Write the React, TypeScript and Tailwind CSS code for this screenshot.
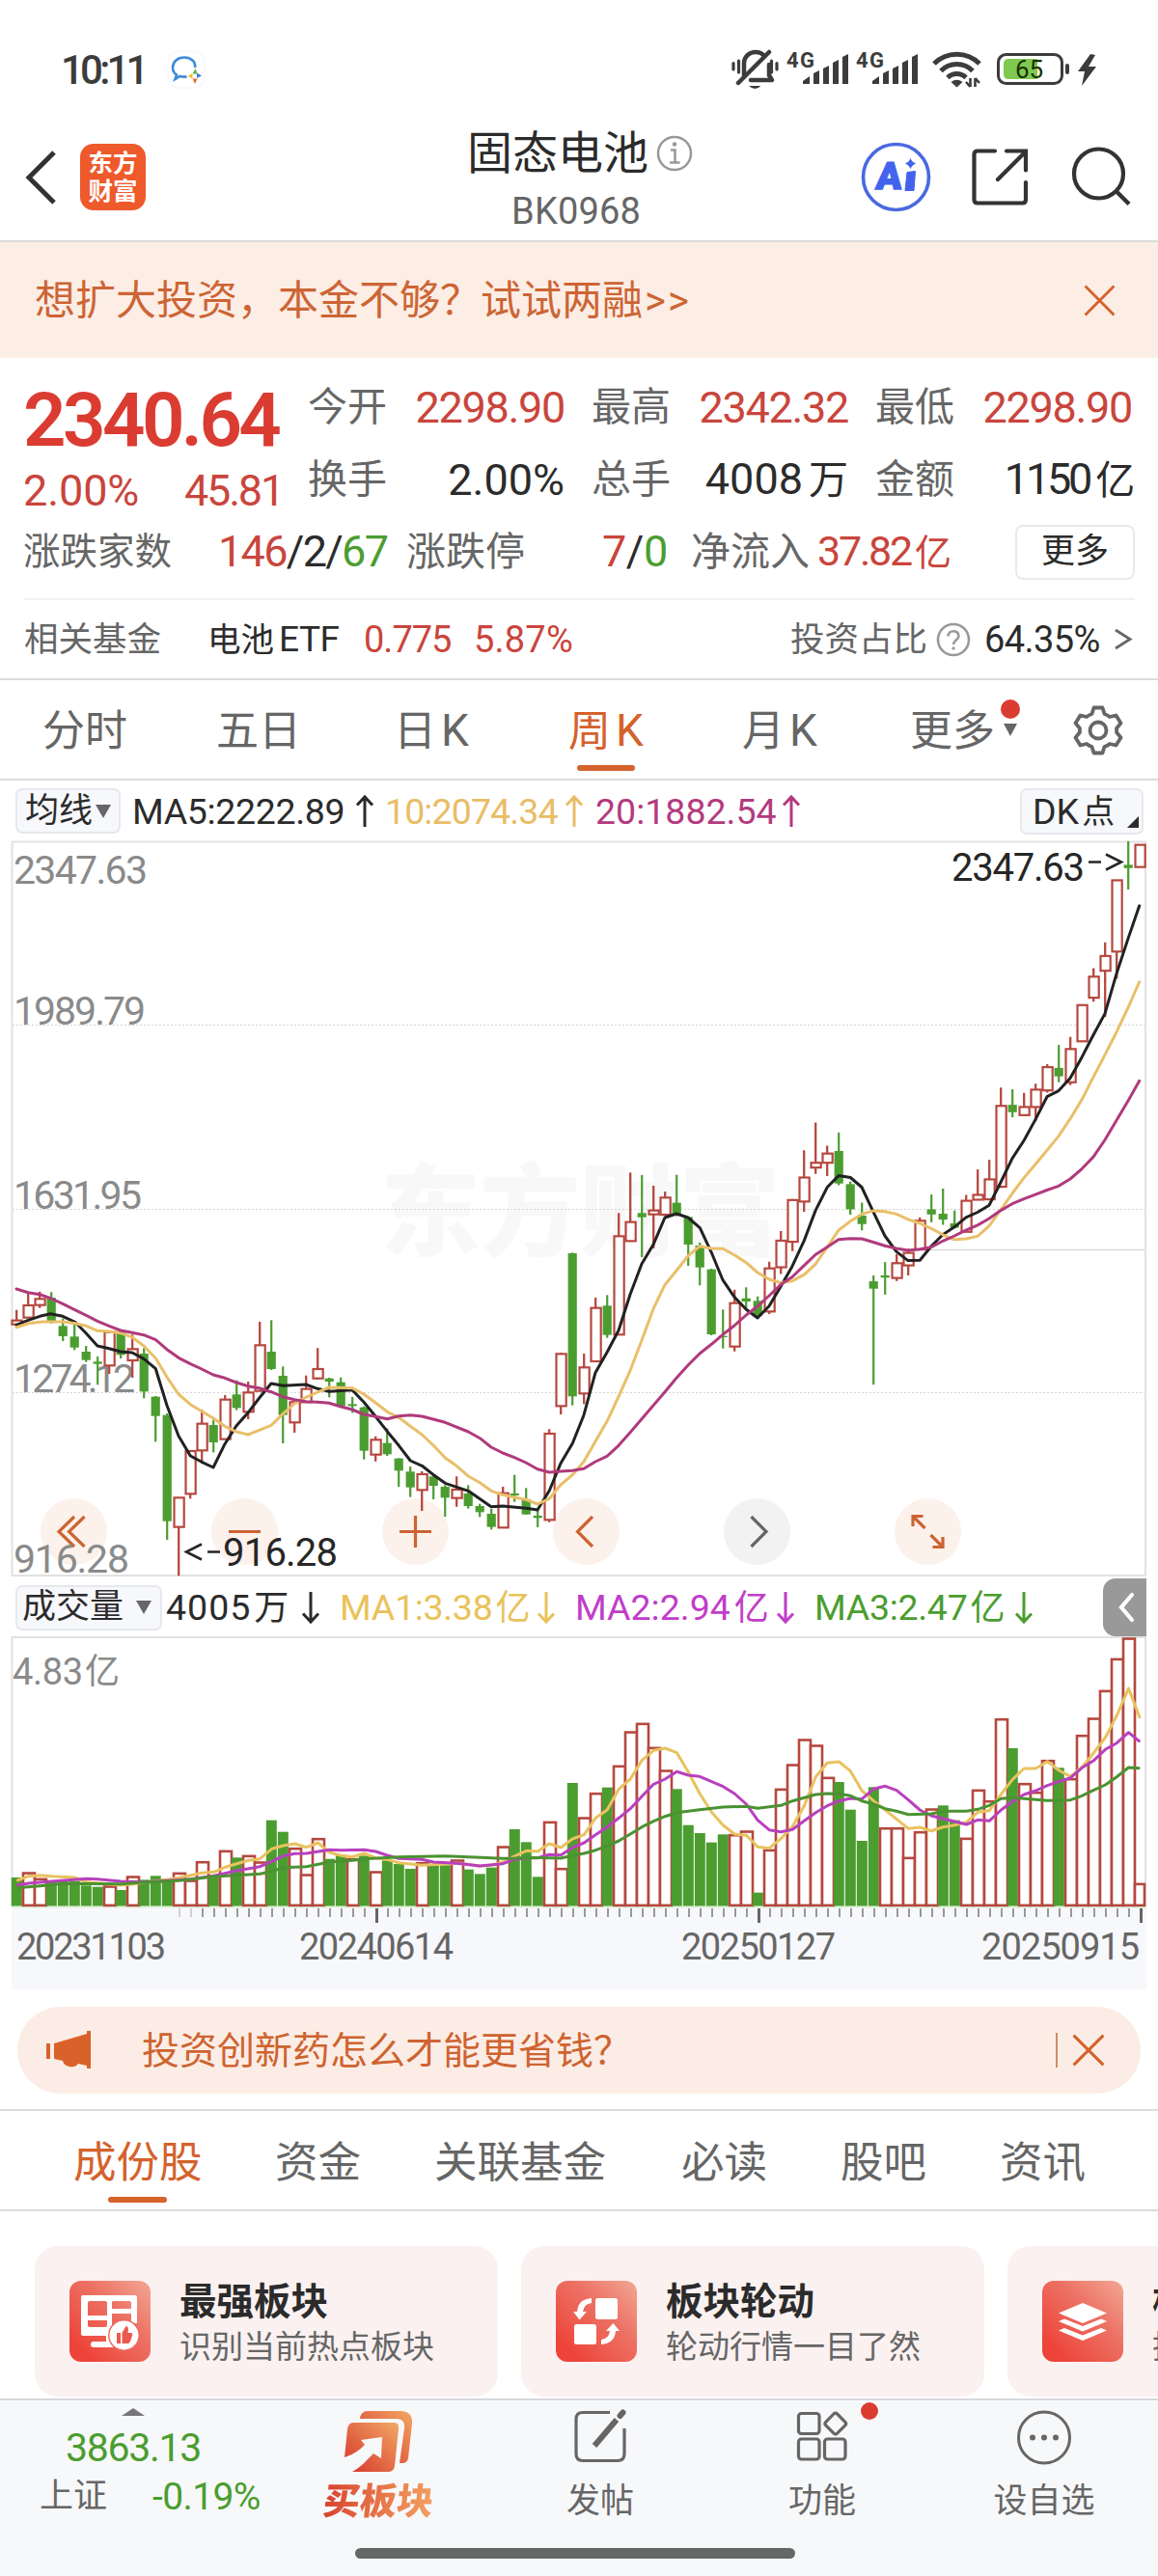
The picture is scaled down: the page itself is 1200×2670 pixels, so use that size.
import React from "react";

const RED = "#b5483f";
const GREEN = "#4b9d30";

type Candle = [string, number, number, number, number];
type Segment<T> = { x0: number; sx: number; y0: number; sy: number; rows: T[] };

/* ---------- price chart data: colour, high, body top, body bottom, low ---------- */
const candleSegments: { y0: number; sy: number; rows: Candle[] }[] = [
  {
    y0: 1180,
    sy: 3,
    rows: [
      ["r", 533, 566, 578, 590], ["r", 483, 519, 557, 557], ["r", 476, 499, 518, 527], ["g", 478, 495, 568, 575],
      ["g", 560, 583, 615, 630], ["g", 570, 616, 650, 658], ["g", 645, 663, 689, 695], ["g", 678, 694, 701, 766],
      ["r", 602, 602, 706, 732], ["g", 600, 600, 673, 684], ["r", 610, 655, 690, 744], ["g", 652, 669, 787, 808],
      ["g", 801, 803, 863, 943], ["g", 855, 860, 1190, 1248], ["r", 1117, 1117, 1208, 1360], ["r", 972, 972, 1105, 1120],
      ["r", 843, 887, 970, 1010], ["g", 875, 891, 945, 976], ["r", 798, 812, 935, 935], ["g", 752, 796, 838, 845],
      ["r", 756, 790, 850, 873], ["r", 570, 643, 785, 785], ["g", 565, 663, 717, 720], ["g", 709, 738, 860, 948],
      ["r", 820, 820, 883, 915], ["r", 737, 779, 820, 820], ["r", 652, 717, 746, 750], ["g", 744, 746, 756, 805],
      ["g", 743, 758, 832, 835], ["g", 804, 826, 832, 853], ["g", 833, 836, 971, 998], ["r", 926, 937, 983, 1004],
      ["g", 902, 947, 982, 987], ["g", 994, 995, 1033, 1083], ["g", 1020, 1036, 1085, 1115], ["r", 1035, 1044, 1093, 1158],
      ["g", 1045, 1051, 1080, 1122], ["g", 1078, 1083, 1117, 1176], ["r", 1051, 1092, 1118, 1145], ["g", 1078, 1104, 1143, 1151],
      ["g", 1136, 1143, 1162, 1177], ["g", 1152, 1167, 1208, 1216], ["r", 1083, 1103, 1210, 1212], ["g", 1046, 1104, 1110, 1130],
      ["g", 1087, 1122, 1169, 1170], ["g", 1152, 1173, 1180, 1209], ["r", 904, 918, 1186, 1193], ["r", 666, 670, 832, 858],
      ["g", 355, 357, 802, 830], ["r", 669, 712, 793, 826], ["r", 495, 527, 693, 693], ["g", 487, 520, 611, 620],
      ["r", 232, 304, 610, 612], ["r", 106, 260, 319, 319], ["g", 114, 232, 245, 369], ["r", 147, 224, 236, 342],
      ["r", 165, 184, 237, 237], ["g", 113, 200, 237, 242], ["g", 243, 244, 330, 396], ["g", 324, 333, 401, 457],
      ["g", 405, 407, 609, 612], ["g", 532, 614, 618, 653], ["r", 470, 512, 647, 662], ["g", 463, 497, 507, 530],
      ["g", 491, 505, 552, 555], ["r", 383, 404, 538, 546],
    ],
  },
  {
    y0: 860,
    sy: 2.613,
    rows: [
      ["r", 1087, 1113, 1185, 1203], ["r", 1000, 1003, 1116, 1141], ["r", 868, 942, 1007, 1035], ["r", 793, 902, 915, 932],
      ["r", 856, 877, 902, 938], ["g", 820, 870, 958, 963], ["g", 953, 960, 1028, 1043], ["g", 1010, 1045, 1068, 1085],
      ["g", 1207, 1223, 1243, 1503], ["g", 1171, 1207, 1213, 1259], ["r", 1150, 1174, 1214, 1222], ["r", 1135, 1146, 1180, 1207],
      ["r", 1050, 1059, 1137, 1137], ["g", 988, 1028, 1042, 1063], ["g", 972, 1040, 1056, 1070], ["g", 1031, 1066, 1078, 1080],
      ["r", 989, 1005, 1089, 1089], ["r", 920, 989, 1002, 1002], ["r", 894, 947, 1001, 1001], ["r", 698, 748, 967, 970],
      ["g", 703, 745, 765, 779], ["r", 713, 751, 773, 775], ["r", 688, 704, 751, 790], ["r", 635, 643, 706, 712],
      ["g", 583, 645, 668, 684], ["r", 561, 594, 684, 692], ["r", 474, 475, 573, 573], ["r", 375, 398, 455, 466],
      ["r", 305, 342, 382, 507], ["r", 136, 137, 330, 403], ["g", 31, 95, 104, 162], ["r", 40, 41, 101, 101],
    ],
  },
];

const candles: Candle[] = candleSegments.flatMap((s) =>
  s.rows.map(([c, ...v]) => [c, ...v.map((n) => s.y0 + n / s.sy)] as Candle),
);
const cx = (i: number) => 17.2 + 12 * i;

type P = [number, number];
const toPoints = (segs: Segment<P>[]) =>
  segs
    .flatMap((s) => s.rows.map(([x, y]) => `${(s.x0 + x / s.sx).toFixed(1)},${(s.y0 + y / s.sy).toFixed(1)}`))
    .join(" ");

const left = { x0: 0, sx: 3, y0: 1180, sy: 3 };
const mid = { x0: 400, sx: 3, y0: 1180, sy: 3 };
const right = { x0: 790, sx: 3, y0: 860, sy: 2.613 };

const ma5 = toPoints([
  { ...left, rows: [[51,580],[88,565],[124,553],[157,545],[195,553],[235,572],[268,606],[303,645],[339,653],[375,663],[411,666],[447,685],[484,716],[519,830],[555,925],[592,987],[627,1006],[663,1023],[699,950],[735,893],[771,853],[806,807],[843,762],[881,769],[951,765],[987,778],[1023,787],[1095,782],[1131,820],[1168,865],[1204,911]] },
  { ...mid, rows: [[40,955],[76,1002],[112,1018],[148,1046],[184,1072],[256,1096],[327,1145],[363,1143],[435,1150],[471,1155],[508,1095],[543,1010],[580,948],[615,860],[651,728],[687,665],[723,597],[759,485],[795,390],[831,330],[867,246],[903,234],[939,246],[976,278],[1012,355],[1047,440],[1083,493],[1120,532],[1155,558]] },
  { ...right, rows: [[21,1290],[57,1237],[93,1182],[130,1113],[165,1032],[202,968],[237,937],[274,942],[309,968],[345,1035],[381,1100],[417,1143],[453,1167],[490,1166],[525,1128],[561,1097],[597,1076],[633,1050],[669,1036],[705,1017],[741,955],[777,890],[813,842],[849,785],[885,723],[921,707],[957,673],[994,615],[1029,556],[1065,498],[1101,390],[1137,295],[1172,206]] },
]);
const ma10 = toPoints([
  { ...left, rows: [[51,587],[88,575],[130,570],[195,570],[235,575],[268,583],[303,598],[339,600],[375,605],[411,618],[447,645],[484,683],[519,742],[555,795],[592,827],[627,848],[663,870],[699,895],[735,912],[771,921],[806,907],[843,892],[879,857],[915,825],[951,805],[987,789],[1023,774],[1095,776],[1131,795],[1168,822],[1204,850]] },
  { ...mid, rows: [[40,868],[76,895],[112,921],[148,955],[184,993],[219,1018],[256,1050],[292,1070],[327,1096],[363,1108],[399,1116],[435,1123],[471,1137],[508,1120],[543,1077],[580,1046],[615,1005],[651,942],[687,880],[723,803],[759,722],[795,628],[831,530],[867,455],[903,411],[939,365],[976,335],[1012,342],[1047,343],[1083,362],[1120,386],[1155,417],[1191,438]] },
  { ...right, rows: [[57,1227],[93,1222],[130,1205],[165,1177],[202,1130],[237,1085],[274,1060],[309,1041],[345,1032],[381,1034],[417,1041],[453,1055],[490,1066],[525,1080],[561,1097],[597,1110],[633,1108],[669,1101],[705,1073],[741,1030],[777,985],[813,943],[849,906],[885,868],[921,830],[957,783],[994,730],[1029,670],[1065,610],[1101,548],[1137,482],[1172,412]] },
]);
const ma20 = toPoints([
  { ...left, rows: [[51,468],[88,479],[124,485],[160,498],[195,514],[231,532],[268,550],[303,568],[339,583],[375,597],[411,604],[447,611],[484,626],[519,656],[555,682],[592,701],[627,717],[663,735],[699,745],[735,759],[771,770],[806,776],[843,788],[879,803],[915,812],[951,818],[987,820],[1023,823],[1060,834],[1095,843],[1131,858],[1168,865],[1204,872]] },
  { ...mid, rows: [[40,863],[76,860],[112,864],[184,883],[256,912],[292,932],[327,960],[363,978],[399,992],[435,1008],[471,1028],[508,1038],[543,1035],[580,1033],[615,1027],[651,1005],[687,988],[723,955],[759,914],[795,872],[867,788],[903,745],[939,705],[976,668],[1012,640],[1047,610],[1083,582],[1120,549],[1155,522]] },
  { ...right, rows: [[21,1262],[57,1232],[93,1211],[130,1180],[165,1151],[202,1130],[237,1110],[274,1107],[309,1108],[345,1117],[381,1127],[417,1134],[453,1139],[490,1136],[525,1131],[561,1114],[597,1100],[633,1085],[669,1071],[705,1053],[741,1031],[777,1013],[813,1000],[849,988],[885,976],[921,965],[957,946],[994,918],[1029,886],[1065,840],[1101,787],[1137,734],[1172,680]] },
]);

/* ---------- volume chart data ---------- */
const volumeTops: [string, number][] = [
  ["g",978],["r",961],["r",980],["g",993],["g",990],["g",989],["g",1003],["g",1007],["r",1003],["g",1017],["r",973],["g",985],["g",973],["g",982],["r",962],["r",985],["r",927],["g",970],["r",893],["g",916],["r",908],["r",928],["g",800],["g",836],["r",885],["r",967],["r",855],["g",920],["g",908],["r",918],["g",910],["r",958],["g",925],["g",936],["g",951],["r",930],["g",940],["g",940],["r",922],["g",953],["g",967],["g",947],["r",880],["g",828],["g",868],["g",976],["r",803],["r",948],["g",684],
  ["r",790],["r",714],["g",698],["r",629],["r",523],["r",497],["r",572],["r",643],["g",703],["g",815],["g",840],["g",869],["g",844],["r",843],["r",832],["g",1025],["r",890],["r",701],["r",625],["r",547],["r",565],["r",665],["g",681],["g",767],["g",864],["g",697],["r",822],["r",822],["r",914],["r",834],["r",763],["g",754],["g",800],["r",854],["r",704],["r",738],["r",483],["g",576],["r",684],["r",711],["r",612],["g",637],["r",669],["r",534],["r",481],["r",395],["r",296],["r",232],["r",995],
];
const vl = { x0: 0, sx: 2.613, y0: 1620, sy: 3 };
const vr = { x0: 600, sx: 2.613, y0: 1620, sy: 3 };
const vma1 = toPoints([
  { ...vl, rows: [[45,988],[77,974],[108,971],[140,974],[202,978],[234,992],[327,1002],[359,999],[390,993],[453,985],[484,979],[516,971],[547,964],[579,961],[610,946],[641,935],[673,925],[704,920],[736,889],[767,879],[798,873],[830,884],[861,870],[892,900],[924,910],[954,914],[986,903],[1017,917],[1048,922],[1080,932],[1142,940],[1205,936],[1237,934],[1268,937],[1299,943],[1330,940],[1362,930],[1393,912],[1425,895],[1456,897],[1487,873],[1519,885],[1550,858]] },
  { ...vr, rows: [[14,845],[45,793],[76,768],[108,703],[139,672],[170,614],[202,583],[233,576],[265,590],[296,650],[327,717],[359,775],[390,815],[421,843],[453,847],[484,883],[515,887],[547,857],[578,820],[610,755],[641,665],[672,622],[704,618],[735,647],[766,708],[798,740],[829,768],[892,826],[923,822],[954,833],[986,821],[1017,815],[1049,806],[1080,775],[1111,770],[1143,719],[1174,673],[1205,639],[1237,639],[1268,617],[1300,645],[1331,664],[1362,635],[1394,590],[1425,543],[1456,475],[1488,390],[1519,483]] },
]);
const vma2 = toPoints([
  { ...vl, rows: [[45,1003],[77,996],[140,990],[234,982],[265,983],[327,990],[390,992],[453,988],[516,983],[579,973],[641,957],[704,944],[736,928],[767,911],[798,904],[830,903],[892,892],[924,893],[986,892],[1017,897],[1048,909],[1080,919],[1142,922],[1174,930],[1237,934],[1299,942],[1362,935],[1393,922],[1425,917],[1456,917],[1487,907],[1519,908],[1550,885]] },
  { ...vr, rows: [[14,870],[45,845],[76,821],[108,793],[139,764],[170,726],[202,688],[233,672],[265,649],[296,660],[327,664],[390,695],[421,717],[453,750],[484,800],[515,830],[547,836],[578,829],[610,802],[641,776],[672,755],[704,740],[735,732],[766,734],[798,703],[829,694],[860,707],[892,737],[923,768],[954,786],[986,795],[1049,813],[1080,799],[1111,802],[1143,768],[1174,742],[1205,720],[1237,708],[1268,692],[1331,668],[1362,637],[1394,614],[1425,580],[1456,560],[1488,527],[1519,556]] },
]);
const vma3 = toPoints([
  { ...vl, rows: [[45,1010],[108,1004],[171,997],[327,998],[390,993],[484,988],[516,984],[579,975],[641,971],[704,967],[736,959],[767,947],[830,944],[892,930],[954,925],[986,920],[1080,914],[1205,911],[1362,919],[1393,919],[1425,916],[1519,918],[1550,910]] },
  { ...vr, rows: [[14,903],[45,893],[76,880],[108,864],[139,843],[170,821],[202,803],[233,788],[265,776],[327,767],[390,759],[453,757],[484,763],[547,754],[578,740],[641,720],[672,717],[704,718],[735,724],[766,740],[798,750],[829,764],[860,772],[892,782],[954,780],[986,772],[1049,772],[1080,766],[1111,754],[1143,733],[1174,730],[1237,736],[1268,739],[1331,737],[1362,724],[1394,706],[1425,690],[1456,665],[1488,636],[1519,638]] },
]);

/* ---------- status bar ---------- */
function Signal() {
  return (
    <svg className="block overflow-visible" width="66" height="40" viewBox="0 0 66 40">
      <text x="0" y="19.300" fontSize="22" fontWeight="700" fill="#3c3c3c" textLength="29">4G</text>
      <g fill="#3c3c3c">
        <path d="M17 36v-3l7-5v8z" />
        <path d="M28 36V25l6-3v14z" />
        <path d="M38 36V20l6-3v19z" />
        <path d="M48 36V14l6-3v25z" />
        <path d="M58 36V8l6-3v31z" />
      </g>
    </svg>
  );
}

function StatusBar() {
  return (
    <div className="flex h-[120px] items-start pt-[50px] text-[#3c3c3c]">
      <div className="ml-[63px] w-[94px] text-[42px] leading-[46px] font-medium tracking-[-3.800px] whitespace-nowrap">10:11</div>
      <svg className="ml-[16px] block" width="42" height="44" viewBox="173 50 42 44">
        <rect x="174" y="53" width="38" height="38" rx="11" fill="#fff" stroke="#f4f4f4" />
        <path d="M202 70c1-6-4-10.500-11-10.500s-12 4.500-12 10.500c0 3.500 1.500 6 4 7.500l-1.500 4.500 5-3c2 .7 4 .9 7 .4" fill="none" stroke="#3f8bd6" strokeWidth="2.600" />
        <path d="M202.500 71l-3 5.500h5z" fill="#56b244" />
        <path d="M209 78.500l-5-3v5.500z" fill="#3a7edb" />
        <path d="M202 87l-2.500-5.500h5z" fill="#ee6a3c" />
        <path d="M194.500 79l5-3v5.500z" fill="#f3bd2e" />
      </svg>
      <div className="flex-1" />
      <svg className="block" width="52" height="44" viewBox="757 50 52 44" fill="none" stroke="#3c3c3c" strokeLinecap="round">
        <path d="M771 79V66c0-8 6-12 12-12 4 0 7 1.500 9 4M797 67v11l3 5h-22" strokeWidth="4.500" strokeLinejoin="round" />
        <path d="M765 86l32-32" strokeWidth="4.500" />
        <path d="M760 65.500v6.500M765.500 63v12M799.500 63v12M805 65.500v6.500" strokeWidth="3.200" />
        <path d="M776 89h12.500q-6 6-12.500 0z" fill="#3c3c3c" stroke="none" />
      </svg>
      <div className="ml-[6px] pt-[1px]"><Signal /></div>
      <div className="ml-[6px] pt-[1px]"><Signal /></div>
      <svg className="ml-[13px] block" width="52" height="44" viewBox="966 50 52 44">
        <g fill="none" stroke="#3c3c3c" strokeWidth="5">
          <path d="M968 66a33 33 0 0 1 47 0" />
          <path d="M975 73.500a23 23 0 0 1 33 0" />
          <path d="M982 80.500a13.500 13.500 0 0 1 19 0" />
        </g>
        <path d="M985.500 85q6-4.500 12 0l-6 5.500z" fill="#3c3c3c" />
        <path d="M1005.500 81v9M1001 85l4.500 5M1010.500 90v-9M1015 86l-4.500-5" stroke="#3c3c3c" strokeWidth="2.600" fill="none" />
      </svg>
      <svg className="ml-[14px] block" width="108" height="44" viewBox="1032 50 108 44">
        <rect x="1034.500" y="56.500" width="66" height="30" rx="8" fill="none" stroke="#3c3c3c" strokeWidth="3" />
        <path d="M1045 61h30v21h-30q-5 0-5-5V66q0-5 5-5z" fill="#80c950" />
        <rect x="1104" y="66" width="4" height="11" rx="2" fill="#3c3c3c" />
        <text x="1052" y="81" fontSize="26" fill="#173106">65</text>
        <path d="M1130 56l-13 18h7l-3 15 15-20h-8l7-12z" fill="#3c3c3c" />
      </svg>
      <div className="w-[60px]" />
    </div>
  );
}

/* ---------- header ---------- */
function Header() {
  return (
    <div className="flex h-[131px] border-b-2 border-[#dcdcdc]">
      <div className="flex w-[400px] items-start pt-[29px] pl-[26px]">
        <svg className="mt-[7px] block" width="34" height="56" viewBox="0 0 34 56">
          <path d="M30 2L4 28l26 26" fill="none" stroke="#333" strokeWidth="5" />
        </svg>
        <div className="ml-[23px] flex h-[69px] w-[68px] flex-col items-center justify-center rounded-[14px] bg-[#ee5a2b] text-[25.500px] leading-[29px] font-bold text-white">
          <span>东方</span>
          <span>财富</span>
        </div>
      </div>
      <div className="w-[400px] pt-[11px]">
        <div className="flex items-center pl-[84px] text-[47px] leading-[56px] text-[#2b2b2b]">
          <span className="whitespace-nowrap">固态电池</span>
          <svg className="ml-[8px] block" width="38" height="38" viewBox="0 0 38 38" fill="none" stroke="#999">
            <circle cx="19" cy="19" r="17" strokeWidth="2.500" />
            <path d="M15 15.500h4.500V28M14 28.500h10.500" strokeWidth="2.600" />
            <circle cx="19" cy="9.500" r="2.200" fill="#999" stroke="none" />
          </svg>
        </div>
        <div className="pt-[10px] pl-[130px] text-[38px] leading-[44px] tracking-[0.200px] text-[#666]">BK0968</div>
      </div>
      <svg className="ml-[88px] block" width="290" height="120" viewBox="888 120 290 120" fill="none" stroke="#333">
        <circle cx="928.500" cy="183.500" r="34" stroke="#4a69e0" strokeWidth="3.600" />
        <text transform="translate(907 195.500) skewX(-5)" fontSize="39" fontWeight="900" fill="#4363ee" stroke="#4363ee" strokeWidth="1.500">A</text>
        <path d="M940 178.500l8.500-1-1.500 20h-9z" fill="#4363ee" stroke="#4363ee" strokeWidth="1" />
        <path d="M943.500 164q1.500 4 5.500 5.500-4 1.500-5.500 5.500-1.500-4-5.500-5.500 4-1.500 5.500-5.500z" fill="#4363ee" stroke="none" />
        <path d="M1031 156.500h-18q-3.500 0-3.500 3.500v47q0 3.500 3.500 3.500h46.500q3.500 0 3.500-3.500v-18M1043 156.500h20v20M1063 157l-29 29" strokeWidth="4.200" strokeLinecap="round" />
        <circle cx="1138.500" cy="180" r="25.500" strokeWidth="4.200" />
        <path d="M1157 198.500l13 13" strokeWidth="4.400" />
      </svg>
    </div>
  );
}

function Cross({ size, width }: { size: number; width: number }) {
  return (
    <svg className="block" width={size} height={size} viewBox="0 0 32 32">
      <path d="M1.500 1.500l29 29M30.500 1.500l-29 29" stroke="#d4622c" strokeWidth={width} fill="none" />
    </svg>
  );
}

/* ---------- quote ---------- */
function Cell({ label, value, tone }: { label: string; value: React.ReactNode; tone: string }) {
  return (
    <div className="flex h-[75px] w-[266px] items-center justify-between whitespace-nowrap">
      <span className="text-[41px] text-[#666]">{label}</span>
      <span className={`pt-[2px] text-[45px] ${tone}`}>{value}</span>
    </div>
  );
}

function Quote() {
  return (
    <div className="h-[334px] border-b-2 border-[#dcdcdc] pt-[13px]">
      <div className="flex">
        <div className="w-[319px] pl-[24px]">
          <div className="flex h-[94px] items-center pt-[8px] text-[78px] font-semibold tracking-[-3.600px] text-[#db3c32]">2340.64</div>
          <div className="flex h-[56px] w-[269px] items-center justify-between pt-[6px] text-[45px] text-[#c9453c]">
            <span className="tracking-[-0.100px]">2.00%</span>
            <span className="tracking-[-2.200px]">45.81</span>
          </div>
        </div>
        <div className="grid grid-cols-[266px_266px_266px] gap-x-[28px] leading-[50px]">
          <Cell label="今开" value="2298.90" tone="tracking-[-1.300px] text-[#c9453c]" />
          <Cell label="最高" value="2342.32" tone="tracking-[-1.300px] text-[#c9453c]" />
          <Cell label="最低" value="2298.90" tone="tracking-[-1.300px] text-[#c9453c]" />
          <Cell label="换手" value="2.00%" tone="text-[#2b2b2b]" />
          <Cell label="总手" value={<>4008<span className="ml-[6px] text-[41px]">万</span></>} tone="text-[#2b2b2b]" />
          <Cell label="金额" value={<>1150<span className="ml-[6px] text-[41px]">亿</span></>} tone="tracking-[-3.200px] text-[#2b2b2b]" />
        </div>
      </div>
      <div className="flex h-[76px] items-center pl-[24px] leading-[50px] whitespace-nowrap">
        <span className="w-[202px] text-[38.500px] text-[#666]">涨跌家数</span>
        <span className="w-[195px] text-[45px] tracking-[-1.700px] text-[#2b2b2b]">
          <span className="text-[#c9453c]">146</span>/2/<span className="text-[#4b9d30]">67</span>
        </span>
        <span className="w-[203px] text-[41px] text-[#666]">涨跌停</span>
        <span className="w-[92px] text-[45px] tracking-[-0.500px] text-[#2b2b2b]">
          <span className="text-[#c9453c]">7</span>/<span className="text-[#4b9d30]">0</span>
        </span>
        <span className="w-[131px] text-[41px] text-[#666]">净流入</span>
        <span className="w-[205px] text-[43px] tracking-[-2.200px] text-[#c9453c]">37.82<span className="ml-[4px] text-[38px]">亿</span></span>
        <span className="flex h-[57px] w-[124px] items-center justify-center rounded-[8px] border-2 border-[#e9e9e9] text-[35px] text-[#2b2b2b]">更多</span>
      </div>
      <div className="mx-[24px] mt-[10px] h-[2px] bg-[#f2f2f2]" />
      <div className="flex h-[82px] items-center pl-[25px] leading-[44px] whitespace-nowrap">
        <span className="w-[190px] text-[35.500px] text-[#666]">相关基金</span>
        <span className="w-[162px] text-[37px] text-[#2b2b2b]"><span className="text-[34.500px]">电池</span><span className="ml-[5px] tracking-[-0.500px]">ETF</span></span>
        <span className="w-[114px] text-[38px] tracking-[-1px] text-[#c9453c]">0.775</span>
        <span className="w-[328px] text-[38px] tracking-[0.200px] text-[#c9453c]">5.87%</span>
        <span className="w-[151px] text-[35.500px] text-[#666]">投资占比</span>
        <svg className="block" width="36" height="36" viewBox="0 0 36 36" fill="none" stroke="#999" strokeWidth="2.600">
          <circle cx="18" cy="18" r="16" />
          <path d="M12.500 14.500c0-7 11-7 11-.5 0 4.500-5.500 4.500-5.500 9" />
          <circle cx="18" cy="27" r="1.700" fill="#999" stroke="none" />
        </svg>
        <span className="ml-[14px] w-[134px] text-[38px] tracking-[-0.600px] text-[#2b2b2b]">64.35%</span>
        <svg className="block" width="20" height="24" viewBox="0 0 20 24">
          <path d="M2 2l15 9.500L2 21" fill="none" stroke="#666" strokeWidth="2.800" />
        </svg>
      </div>
    </div>
  );
}

/* ---------- period tabs ---------- */
function PeriodTabs() {
  return (
    <div className="flex h-[104px] items-center border-b-2 border-[#dcdcdc] pt-[3px] pl-[44px] text-[44px] leading-[50px] whitespace-nowrap text-[#666]">
      <span className="w-[180px]">分时</span>
      <span className="w-[184px]">五日</span>
      <span className="w-[181px]">日<span className="ml-[5px] text-[46px]">K</span></span>
      <span className="relative w-[180px] text-[#d4622c]">
        周<span className="ml-[5px] text-[46px]">K</span>
        <span className="absolute top-[61px] left-[9px] h-[6px] w-[60px] rounded-[3px] bg-[#d4622c]" />
      </span>
      <span className="w-[174px]">月<span className="ml-[5px] text-[46px]">K</span></span>
      <span className="relative w-[168px]">
        更多
        <span className="absolute -top-[8px] left-[94px] h-[20px] w-[20px] rounded-full bg-[#db3c32]" />
        <svg className="absolute top-[17px] left-[96px] block" width="16" height="14" viewBox="0 0 16 14"><path d="M1 0h14L8 13z" fill="#666" /></svg>
      </span>
      <svg className="-mt-[2px] block" width="54" height="54" viewBox="0 0 54 54" fill="none" stroke="#666" strokeWidth="3.800" strokeLinejoin="round">
        <path d="M22.500 3.500h9l2 6.500q3 1 5.500 3l6.500-1.500 5 8-4.500 5.500q.3 2 0 4l4.500 5.500-5 8-6.500-1.500q-2.500 2-5.500 3l-2 6.500h-9l-2-6.500q-3-1-5.500-3l-6.500 1.500-5-8L8 29q-.3-2 0-4l-4.500-5.500 5-8L15 13q2.500-2 5.500-3z" />
        <circle cx="27" cy="27" r="8.500" />
      </svg>
    </div>
  );
}

function Arrow({ up, color }: { up?: boolean; color: string }) {
  return (
    <svg className="block" width="20" height="36" viewBox="0 0 20 36">
      <path d={up ? "M10 34V3M2 11.500L10 3l8 8.500" : "M10 2v31M2 24.500L10 33l8-8.500"} fill="none" stroke={color} strokeWidth="3" />
    </svg>
  );
}

function Caret() {
  return <svg className="block" width="16" height="14" viewBox="0 0 16 14"><path d="M0 0h16L8 14z" fill="#666" /></svg>;
}

function MaRow() {
  return (
    <div className="flex h-[63px] items-center pl-[16px] text-[37.500px] leading-[44px] whitespace-nowrap">
      <div className="flex h-[47px] w-[109px] items-center gap-[3px] rounded-[7px] border-2 border-[#e6e8ed] bg-[#f7f8fb] pl-[8px] text-[35px] text-[#2b2b2b]">
        均线<Caret />
      </div>
      <span className="ml-[12px] w-[231px] tracking-[-0.350px] text-[#2b2b2b]">MA5:2222.89</span>
      <Arrow up color="#2b2b2b" />
      <span className="ml-[11px] w-[186px] tracking-[-0.900px] text-[#e9bd66]">10:2074.34</span>
      <Arrow up color="#e9bd66" />
      <span className="ml-[12px] w-[193px] tracking-[0px] text-[#b33a7f]">20:1882.54</span>
      <Arrow up color="#b33a7f" />
      <div className="relative ml-[227px] flex h-[48px] w-[128px] items-center rounded-[7px] border-2 border-[#e6e8ed] bg-[#f7f8fb] pl-[11px] text-[#2b2b2b]">
        DK<span className="ml-[3px] text-[34px]">点</span>
        <svg className="absolute right-[3px] bottom-[5px] block" width="12" height="12" viewBox="0 0 12 12"><path d="M12 0v12H0z" fill="#2b2b2b" /></svg>
      </div>
    </div>
  );
}

/* ---------- price chart ---------- */
function PriceChart() {
  const yLabels: [string, number, number][] = [
    ["2347.63", 916, 139], ["1989.79", 1062, 137], ["1631.95", 1253, 133], ["1274.12", 1443, 126], ["916.28", 1630, 120],
  ];
  return (
    <svg className="block overflow-visible" width="1200" height="764" viewBox="0 872 1200 764" fontSize="41">
      <text x="394" y="1294" textLength="414" fontSize="104" fontWeight="900" fill="#f8f8f8">东方财富</text>
      <path d="M13 1062.500H1187M13 1253.500H1187M13 1443.500H1187" stroke="#d4d4d4" strokeDasharray="2 2" />
      <path d="M936 1295.500H1187" stroke="#cfcfcf" />
      <path d="M12.500 1633V872.500H1187V1633Z" fill="none" stroke="#e2e2e2" strokeWidth="2" />
      {[76.5, 253.5, 430.5, 607.5, 784.5, 961.5].map((x, i) => (
        <circle key={x} cx={x} cy="1587.500" r="34.500" fill={i === 4 ? "#f2f2f2" : "#fcf1eb"} />
      ))}
      <g fill="none" stroke="#cb6433" strokeWidth="3.200">
        <path d="M77 1572l-16 15.500 16 15.500M87.500 1572l-16 15.500 16 15.500" />
        <path d="M237 1587.500h33M414 1587.500h33M430.500 1571v33" />
        <path d="M614 1572l-15.500 15.500 15.500 15.500" />
        <path d="M778.500 1572l15.500 15.500-15.500 15.500" stroke="#666" />
        <path d="M946 1582v-10.500h10.500M946.500 1572l12 12M977 1593v10.500h-10.500M976.500 1603l-12-12" />
      </g>
      <g fill="#8a8a8a">
        {yLabels.map(([t, y, w]) => (
          <text key={t} x="14" y={y} textLength={w}>{t}</text>
        ))}
      </g>
      {candles.map(([c, h, t, b, l], i) => {
        const x = cx(i);
        return c === "g" ? (
          <g key={i} fill={GREEN}>
            <rect x={x - 1.1} y={h} width="2.200" height={l - h} />
            <rect x={x - 4.6} y={t} width="9.200" height={b - t} />
          </g>
        ) : (
          <g key={i}>
            <path d={`M${x} ${h}V${t}M${x} ${b}V${l}`} stroke={RED} strokeWidth="2.300" />
            <rect x={x - 4.7} y={t} width="10.200" height={Math.max(b - t, 1)} fill="#fff" stroke={RED} strokeWidth="2.200" />
          </g>
        );
      })}
      <g fill="none" strokeWidth="3" strokeLinejoin="round" strokeLinecap="round">
        <polyline points={ma5} stroke="#222" />
        <polyline points={ma10} stroke="#e9bf6a" />
        <polyline points={ma20} stroke="#b03a7c" />
      </g>
      <g fill="#262626" fontSize="40">
        <text x="986" y="913" textLength="138">2347.63</text>
        <path d="M1128 893.500h13M1146 885.500l16 8-16 8" fill="none" stroke="#262626" strokeWidth="2.600" />
        <text x="231" y="1623" textLength="119">916.28</text>
        <path d="M215 1608.500h13M209 1600.500l-16 8 16 8" fill="none" stroke="#262626" strokeWidth="2.600" />
      </g>
    </svg>
  );
}

/* ---------- volume ---------- */
function VolumeRow() {
  return (
    <div className="flex h-[60px] items-center pl-[16px] text-[37.500px] leading-[44px] whitespace-nowrap">
      <div className="flex h-[47px] w-[152px] items-center gap-[13px] rounded-[7px] border-2 border-[#e6e8ed] bg-[#f7f8fb] pl-[5px] text-[35px] text-[#2b2b2b]">
        成交量<Caret />
      </div>
      <span className="ml-[4px] w-[140px] tracking-[1px] text-[#2b2b2b]">4005<span className="ml-[3px] text-[36px]">万</span></span>
      <Arrow color="#2b2b2b" />
      <span className="ml-[20px] w-[204px] tracking-[-0.300px] text-[#e9c25a]">MA1:3.38<span className="ml-[3px] text-[36px]">亿</span></span>
      <Arrow color="#e9c25a" />
      <span className="ml-[20px] w-[208px] tracking-[0px] text-[#c03ec9]">MA2:2.94<span className="ml-[4px] text-[36px]">亿</span></span>
      <Arrow color="#c03ec9" />
      <span className="ml-[20px] w-[207px] tracking-[-0.300px] text-[#4b9d30]">MA3:2.47<span className="ml-[3px] text-[36px]">亿</span></span>
      <Arrow color="#4b9d30" />
      <div className="ml-[72px] flex h-[60px] w-[45px] items-center rounded-l-[13px] bg-[#999] pl-[15px]">
        <svg className="block" width="18" height="32" viewBox="0 0 18 32"><path d="M15 3L4 16l11 13" fill="none" stroke="#fff" strokeWidth="4.200" strokeLinecap="round" /></svg>
      </div>
    </div>
  );
}

function VolumeChart() {
  const dates: [string, number, number][] = [
    ["20231103", 17, 155], ["20240614", 310, 160], ["20250127", 706, 160], ["20250915", 1017, 164],
  ];
  const bottom = 1975.5;
  return (
    <svg className="block" width="1200" height="366" viewBox="0 1696 1200 366" fontSize="38">
      <rect x="12" y="1977" width="1176" height="85" fill="#f7f8fb" />
      <path d="M12.500 1976V1697H1187V1976" fill="none" stroke="#e2e2e2" strokeWidth="2" />
      <text x="13" y="1746" fill="#8a8a8a" textLength="73">4.83</text>
      <text x="88" y="1745" fill="#8a8a8a" fontSize="36">亿</text>
      <rect x="12" y="1975.500" width="1176" height="2" fill="#dcefd6" />
      {volumeTops.map(([c, v], i) => {
        const x = cx(i);
        const y = 1620 + v / 3;
        return c === "g" ? (
          <rect key={i} x={x - 5.4} y={y} width="11" height={bottom - y} fill={GREEN} />
        ) : (
          <rect key={i} x={x - 5.2} y={y + 1.2} width={i === 97 ? 10 : 12} height={bottom - y - 1.8} fill="#fff" stroke={RED} strokeWidth="2.600" />
        );
      })}
      <g fill="none" strokeWidth="3" strokeLinejoin="round">
        <polyline points={vma1} stroke="#e9c25f" />
        <polyline points={vma2} stroke="#b840bd" />
        <polyline points={vma3} stroke="#4b9232" />
      </g>
      {volumeTops.map((_, i) =>
        i < 14 ? null : (
          <rect
            key={i}
            x={cx(i) - 0.2}
            y="1978"
            width={i === 31 || i === 64 || i === 97 ? 3 : 2}
            height={i === 31 || i === 64 || i === 97 ? 15 : 9}
            fill={i < 16 ? "#d0d0d0" : i === 31 || i === 64 || i === 97 ? "#666" : "#999"}
          />
        ),
      )}
      <g fill="#666">
        {dates.map(([d, x, w]) => (
          <text key={d} x={x} y="2031" textLength={w}>{d}</text>
        ))}
      </g>
    </svg>
  );
}

/* ---------- promo and content tabs ---------- */
function Promo() {
  return (
    <div className="mx-[18px] mt-[18px] flex h-[90px] items-center rounded-[45px] bg-[#fbede5] pl-[30px] text-[39px] leading-[50px] text-[#cf6330]">
      <svg className="block" width="48" height="40" viewBox="0 0 48 40" fill="#d9622b">
        <path d="M0 13h4v16H0z" />
        <path d="M8 13L42 3V0h4v39h-4v-3l-9-2q-3 4-9 3-6-1-7-6l-9-2z" />
      </svg>
      <span className="ml-[51px] w-[947px] pt-[1px] whitespace-nowrap">投资创新药怎么才能更省钱？</span>
      <span className="h-[36px] w-[2px] bg-[#d08a68]" />
      <span className="ml-[15px]"><Cross size={34} width={2.800} /></span>
    </div>
  );
}

function ContentTabs() {
  return (
    <div className="mt-[16px] flex h-[106px] items-center border-y-2 border-[#dcdcdc] pt-[6px] pl-[76px] text-[44.500px] leading-[50px] whitespace-nowrap text-[#666]">
      <span className="relative w-[209px] text-[#d4622c]">
        成份股
        <span className="absolute top-[60px] left-[36px] h-[6px] w-[61px] rounded-[3px] bg-[#d4622c]" />
      </span>
      <span className="w-[165px]">资金</span>
      <span className="w-[256px]">关联基金</span>
      <span className="w-[165px]">必读</span>
      <span className="w-[165px]">股吧</span>
      <span>资讯</span>
    </div>
  );
}

function Card({ title, sub, children }: { title: string; sub: string; children: React.ReactNode }) {
  return (
    <div className="flex h-[156px] w-[480px] shrink-0 items-center rounded-[24px] bg-[#fbf1f0] pl-[36px] whitespace-nowrap">
      <svg className="block rounded-[12px] bg-linear-to-tr from-[#ee4339] from-15% via-[#ec7064] via-60% to-[#f2a794]" width="84" height="84" viewBox="0 0 84 84">
        {children}
      </svg>
      <div className="ml-[30px] pt-[3px]">
        <div className="text-[38.500px] leading-[50px] font-bold text-[#2b2b2b]">{title}</div>
        <div className="text-[33px] leading-[44px] text-[#666]">{sub}</div>
      </div>
    </div>
  );
}

function Cards() {
  return (
    <div className="flex h-[194px] gap-[24px] overflow-hidden pt-[36px] pl-[36px]">
      <Card title="最强板块" sub="识别当前热点板块">
        <path fill="#fff" fillRule="evenodd" d="M14 15h54q2 0 2 2v27H44v13H14q-2 0-2-2V17q0-2 2-2zM19 23v13h20V23q0-2-2-2H21q-2 0-2 2zM44 22v7h20v-6q0-2-2-2H46q-2 0-2 1zM44 34v10h20V34zM19 41v5q0 2 2 2h16q2 0 2-2v-5z" />
        <path d="M38 55v8H25q-3 0-3 3t3 3h22V55z" fill="#fff" />
        <circle cx="56.500" cy="56.500" r="16.500" fill="#ee6a5f" />
        <circle cx="56.500" cy="56.500" r="15" fill="#fff" />
        <path d="M49 54h4v11h-4zM54.500 54l4-7q3.500 0 2 7h4q1.500 1 .5 3l-2 6q-.8 2-2.500 2h-6z" fill="#ec5a4f" />
      </Card>
      <Card title="板块轮动" sub="轮动行情一目了然">
        <g fill="#fff">
          <rect x="41" y="18" width="23" height="22" rx="2.500" />
          <rect x="19" y="45" width="23" height="21" rx="2.500" />
          <path d="M37 18v5q-8 1-9 9h4l-7.500 8.500L18 32h4q1-13 15-14z" />
          <path d="M47 66v-5q8-1 9-9h-4l7.500-8 6.500 8h-4q-1 13-15 14z" />
        </g>
      </Card>
      <Card title="板块热度" sub="挖掘板块机会">
        <g fill="#fff">
          <path d="M42 23l25 10.500-25 10.500-25-10.500z" />
          <path d="M17 42l6-2.500L42 47l19-7.500 6 2.500-25 10.500z" />
          <path d="M17 51.500l6-2.500 19 7.500L61 49l6 2.500L42 62z" />
        </g>
      </Card>
    </div>
  );
}

/* ---------- bottom navigation ---------- */
function NavItem({ label, children }: { label: string; children: React.ReactNode }) {
  return (
    <div className="flex w-[230px] flex-col items-center pt-[7px]">
      {children}
      <span className="mt-[16px] text-[35px] leading-[44px] text-[#666]">{label}</span>
    </div>
  );
}

function BottomNav() {
  return (
    <div className="h-[184px] border-t-2 border-[#d5d8dc] bg-[#f7f8fa]">
      <div className="flex h-[153px] whitespace-nowrap">
        <div className="w-[277px] pt-[8px]">
          <svg className="ml-[126px] block" width="24" height="8" viewBox="0 0 24 8"><path d="M0 8L12 0l12 8z" fill="#77777c" /></svg>
          <div className="mt-[8px] pl-[68px] text-[41px] leading-[50px] tracking-[-1.300px] text-[#4b9d30]">3863.13</div>
          <div className="flex items-center pt-[2px] leading-[48px]">
            <span className="ml-[41px] w-[117px] text-[35px] text-[#666]">上证</span>
            <span className="text-[39px] tracking-[-0.600px] text-[#4b9d30]">-0.19%</span>
          </div>
        </div>
        <div className="flex w-[230px] flex-col items-center pt-[10px]">
          <svg className="block" width="72" height="66" viewBox="0 0 72 66">
            <defs>
              <linearGradient id="buy" x1="0" y1="1" x2="1" y2="0">
                <stop offset="0.100" stopColor="#d8402f" />
                <stop offset="1" stopColor="#f2a865" />
              </linearGradient>
            </defs>
            <path d="M17 9q1-8 8-8h35q12 1 11 13l-4 36q-1 5-6 5h-3l5-36q1-10-8-10z" fill="url(#buy)" />
            <path d="M10 13h42q6 0 5 7l-4 38q-1 6-7 6H9q9-5 16-13l6-6 8 5 1-22-22 3 4 5Q14 45 1 49L4 20q1-7 6-7z" fill="url(#buy)" />
          </svg>
          <span className="mt-[6px] -skew-x-6 bg-linear-to-r from-[#d8402f] to-[#f2a060] bg-clip-text text-[38px] leading-[46px] font-black text-transparent">买板块</span>
        </div>
        <NavItem label="发帖">
          <svg className="block" width="60" height="60" viewBox="0 0 60 60" fill="none" stroke="#666" strokeWidth="3.200">
            <path d="M40 5.500H12q-7 0-7 7v36q0 7 7 7h36q7 0 7-7V22" />
            <path d="M24 40l23-27" strokeWidth="6" />
            <path d="M50.500 9l3-3.500" strokeWidth="6" strokeLinecap="round" />
          </svg>
        </NavItem>
        <div className="relative">
          <NavItem label="功能">
            <svg className="block" width="60" height="60" viewBox="0 0 60 60" fill="none" stroke="#666" strokeWidth="3.200">
              <rect x="5.500" y="6.500" width="21.500" height="21" rx="3" />
              <rect x="5.500" y="33" width="21.500" height="21" rx="3" />
              <rect x="32.500" y="33" width="21.500" height="21" rx="3" />
              <path d="M42 7q1.800-1.800 3.600 0l8.200 8.300q1.800 1.800 0 3.600l-8.200 8.300q-1.800 1.800-3.600 0L33.800 18.900q-1.800-1.800 0-3.600z" />
            </svg>
          </NavItem>
          <span className="absolute top-[2px] left-[155px] h-[18px] w-[18px] rounded-full bg-[#db3c32]" />
        </div>
        <NavItem label="设自选">
          <svg className="block" width="60" height="60" viewBox="0 0 60 60">
            <circle cx="30" cy="31.500" r="26.500" fill="none" stroke="#666" strokeWidth="3" />
            <g fill="#666"><circle cx="18" cy="31.500" r="3" /><circle cx="30" cy="31.500" r="3" /><circle cx="42" cy="31.500" r="3" /></g>
          </svg>
        </NavItem>
      </div>
      <div className="ml-[368px] h-[11px] w-[456px] rounded-full bg-[#666867]" />
    </div>
  );
}

export default function App() {
  return (
    <div className="flex h-[2670px] w-[1200px] flex-col overflow-hidden bg-white font-[Roboto,'Noto_Sans_CJK_SC',sans-serif]">
      <StatusBar />
      <Header />
      <div className="flex h-[120px] items-center bg-[#fcede5] pl-[36px] text-[42px] leading-[50px] whitespace-nowrap text-[#cc6534]">
        <span className="w-[1087px] pt-[2px]">想扩大投资，本金不够？试试两融<span className="ml-[2px] tracking-[2px]">&gt;&gt;</span></span>
        <Cross size={33} width={2.800} />
      </div>
      <Quote />
      <PeriodTabs />
      <MaRow />
      <PriceChart />
      <VolumeRow />
      <VolumeChart />
      <Promo />
      <ContentTabs />
      <Cards />
      <BottomNav />
    </div>
  );
}
